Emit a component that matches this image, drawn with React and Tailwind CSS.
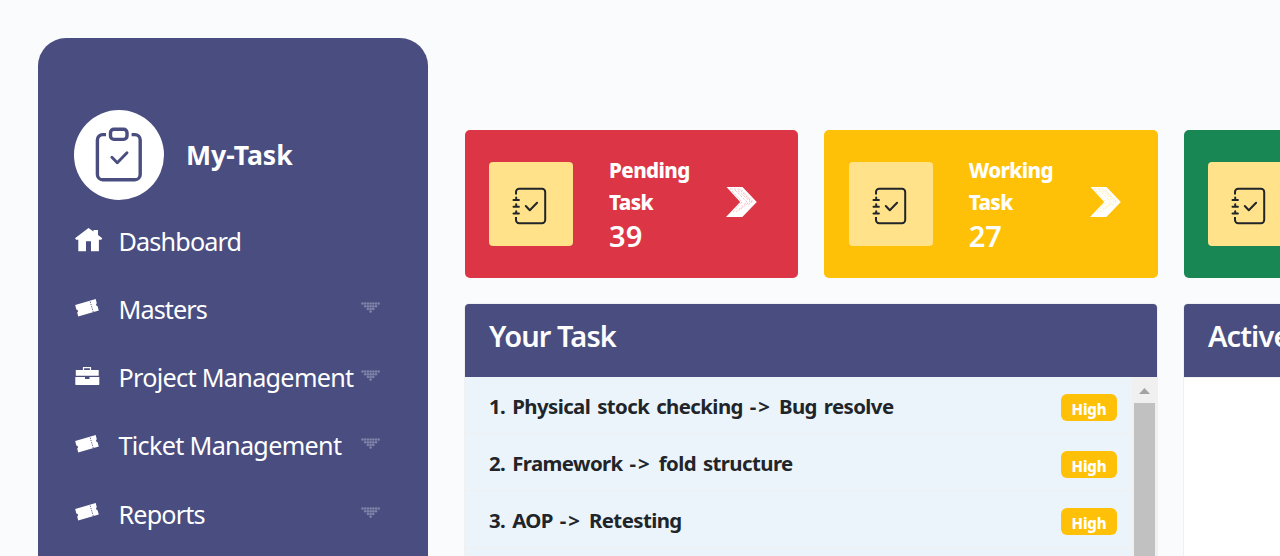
import React from 'react';

function ClipboardIcon() {
  return (
    <svg width="48" height="56" viewBox="0 0 48 56" fill="none" stroke="#494d7f" strokeWidth="3.4" strokeLinecap="butt" strokeLinejoin="round">
      <path d="M11 7.600H7.700a5.300 5.300 0 0 0-5.300 5.300v34.500a5.300 5.300 0 0 0 5.300 5.300h32.200a5.300 5.300 0 0 0 5.300-5.300V12.900a5.300 5.300 0 0 0-5.300-5.300h-3.300" />
      <rect x="15.500" y="2.200" width="16.500" height="10.200" rx="3.400" />
      <path d="M16.900 30.200l5.400 5.600L32 25.800" strokeWidth="2.900" strokeLinecap="round" />
    </svg>
  );
}

function NotebookIcon() {
  return (
    <svg width="36" height="38" viewBox="0 0 36 38" fill="none" stroke="#212529" strokeWidth="2" strokeLinecap="butt" strokeLinejoin="round">
      <path d="M4 7.500V5a3.200 3.200 0 0 1 3.200-3.200h22.800a3.200 3.200 0 0 1 3.200 3.200v28a3.200 3.200 0 0 1-3.200 3.200H7.200A3.200 3.200 0 0 1 4 33v-3" />
      <path d="M1.500 13h5.400M1.500 19.700h5.400M1.500 26.600h5.400M4.200 10.600v2.400M4.200 17.300v2.400M4.200 24.200v2.400" strokeLinecap="round" strokeWidth="2" />
      <path d="M13.800 19l4 4.200 7.300-7.500" strokeWidth="2" strokeLinecap="round" />
    </svg>
  );
}

function ArrowIcon({ hatch }) {
  return (
    <svg width="31" height="31" viewBox="0 0 31 31">
      <path d="M.5 0h16L30.800 15 16.300 30H0L14.200 15z" fill="#fff" />
      <g fill="none" stroke={hatch} strokeWidth=".6" strokeDasharray="2.500 1.200" opacity=".5">
        <path d="M4 2h9l13 13-4 3M6 4l10 11-9 10M9 3l12 12-12 11M12 3.500l12 11-11 9M15 2.500l12 12" />
      </g>
    </svg>
  );
}

function HomeIcon() {
  return (
    <svg width="28" height="24" viewBox="0 0 28 24" fill="#fff">
      <path d="M13.500 0l5 3.600V2H23v5l4.300 3.200-1 1.500h-2.400V23.200H16v-10h-5v10H3.300V11.700H1.200L0 10.200z" />
    </svg>
  );
}

function TicketIcon() {
  return (
    <svg width="24" height="18" viewBox="0 0 24 18">
      <path d="M.2 5.900L20.700.100l1.100 4.200c-1.300.9-.8 2.700.8 3l1.200 4.200L3.200 17.600l-1-4.100c1.500-.9 1-2.900-.9-3z" fill="#fff" />
      <path d="M15.200 2.600l3.100 10.600" stroke="#494d7f" strokeWidth=".9" strokeDasharray="1.300 1.100" />
    </svg>
  );
}

function BriefcaseIcon() {
  return (
    <svg width="25" height="18" viewBox="0 0 25 18" fill="#fff">
      <path d="M8.500 3V.7h7V3" fill="none" stroke="#fff" strokeWidth="1.200" />
      <path d="M.8 3h22.900v5.800H.8zM.3 10H10v2h4.500v-2h9.800v7.300a.7.700 0 0 1-.7.700H1a.7.700 0 0 1-.7-.7z" />
    </svg>
  );
}

const dotRows = [7, 5, 3, 1];

function DotsDown() {
  return (
    <svg width="20" height="12" viewBox="0 0 20 12" fill="#7f82a8">
      {dotRows.map((n, r) =>
        Array.from({ length: n }, (_, i) => (
          <circle key={`${r}-${i}`} cx={1.5 + (i + r) * 2.7} cy={1.5 + r * 2.7} r="1.3" />
        ))
      )}
    </svg>
  );
}

function NavItem({ icon, label, tracking, more }) {
  return (
    <div className="flex h-[68.15px] items-start">
      <div className="flex h-[31px] w-[44.5px] shrink-0 items-center pl-[0.5px]">{icon}</div>
      <div className={`-mt-px w-[242.5px] shrink-0 whitespace-nowrap text-[25.2px] leading-[36px] ${tracking}`}>{label}</div>
      {more && <div className="pt-[10px]"><DotsDown /></div>}
    </div>
  );
}

function StatCard({ bg, title, count, hatch, titleTracking, textWidth }) {
  return (
    <div className={`flex h-[148px] w-[333.6px] shrink-0 rounded-[5px] pl-[24.3px] pt-8 ${bg}`}>
      <div className="flex h-[84px] w-[84px] shrink-0 items-center justify-center rounded-[4px] bg-[#ffe28a]">
        <div className="pr-[2px] pt-[4px]"><NotebookIcon /></div>
      </div>
      {title && (
        <>
          <div className={`-mt-2 ml-9 shrink-0 text-white ${textWidth}`}>
            <div className={`w-[90px] text-[20.5px] font-extrabold leading-[32px] ${titleTracking}`}>{title}</div>
            <div className="text-[29px] font-semibold leading-[36px]">{count}</div>
          </div>
          <div className="pt-[25px]"><ArrowIcon hatch={hatch} /></div>
        </>
      )}
    </div>
  );
}

const tasks = [
  { from: '1. Physical stock checking ', to: ' Bug resolve' },
  { from: '2. Framework ', to: ' fold structure' },
  { from: '3. AOP ', to: ' Retesting' },
];

export default function App() {
  return (
    <div className="flex h-[556px] w-[1280px] overflow-hidden bg-[#fafbfd] pl-[38px] pt-[38px] font-['Noto_Sans','Open_Sans',sans-serif]">
      <aside className="h-[560px] w-[390px] shrink-0 rounded-t-[28px] bg-[#494d7f] pl-9 pt-[72px] text-white">
        <div className="flex items-center">
          <div className="flex h-[90px] w-[90px] items-center justify-center rounded-full bg-white">
            <ClipboardIcon />
          </div>
          <div className="ml-[22px] pt-[2px] text-[26.6px] font-bold tracking-[0px]">My-Task</div>
        </div>
        <nav className="pt-[24px]">
          <NavItem icon={<HomeIcon />} label="Dashboard" tracking="tracking-[-0.85px]" />
          <NavItem icon={<TicketIcon />} label="Masters" tracking="tracking-[-0.9px]" more />
          <NavItem icon={<BriefcaseIcon />} label="Project Management" tracking="tracking-[-0.7px]" more />
          <NavItem icon={<TicketIcon />} label="Ticket Management" tracking="tracking-[-0.7px]" more />
          <NavItem icon={<TicketIcon />} label="Reports" tracking="tracking-[-0.85px]" more />
        </nav>
      </aside>

      <main className="ml-[36.8px] shrink-0 pt-[92px]">
        <div className="flex gap-[26px]">
          <StatCard bg="bg-[#dc3545]" title="Pending Task" count="39" hatch="#dc3545" titleTracking="tracking-[-0.6px]" textWidth="w-[117px]" />
          <StatCard bg="bg-[#ffc107]" title="Working Task" count="27" hatch="#ffc107" titleTracking="tracking-[-0.6px]" textWidth="w-[121px]" />
          <StatCard bg="bg-[#198754]" />
        </div>

        <div className="-ml-[0.8px] mt-[25px] flex gap-[25px]">
          <section className="h-[300px] w-[694px] shrink-0 overflow-hidden rounded-[5px] border border-[#f0f0f0] bg-[#ebf4fb]">
            <h2 className="h-[73px] bg-[#494d7f] pl-6 text-[29px] font-semibold leading-[63px] tracking-[-0.9px] text-[#fdfdfe]">Your Task</h2>
            <div className="flex">
              <ul className="w-[667px]">
                {tasks.map((t) => (
                  <li key={t.from} className="flex h-[57px] items-start justify-between border-b border-[#f0f0f0] pl-6 pr-[15px]">
                    <span className="whitespace-nowrap text-[20.4px] font-bold leading-[58px] tracking-[-0.58px] text-[#212529] [word-spacing:2.2px]">
                      {t.from}
                      <span className="tracking-[2px]">{'->'}</span>
                      {t.to}
                    </span>
                    <span className="mt-[17px] flex h-[27px] w-14 items-center justify-center rounded-[6px] bg-[#ffc107] pt-[3px] text-[15px] font-extrabold tracking-[-0.2px] text-white">High</span>
                  </li>
                ))}
              </ul>
              <div className="flex h-[220px] w-[25px] flex-col items-center bg-[#f0f0f0]">
                <svg width="11" height="26" viewBox="0 0 11 26"><path d="M0 17l5.500-6 5.500 6z" fill="#a3a3a3" /></svg>
                <div className="w-[21px] grow bg-[#c1c1c1]" />
              </div>
            </div>
          </section>
          <section className="h-[300px] w-[695px] shrink-0 overflow-hidden rounded-[5px] border border-[#f0f0f0] bg-white">
            <h2 className="h-[74px] border-b border-[#f0f0f0] bg-[#494d7f] pl-6 text-[29px] font-semibold leading-[63px] tracking-[-0.9px] text-[#fdfdfe]">Active Task</h2>
          </section>
        </div>
      </main>
    </div>
  );
}
